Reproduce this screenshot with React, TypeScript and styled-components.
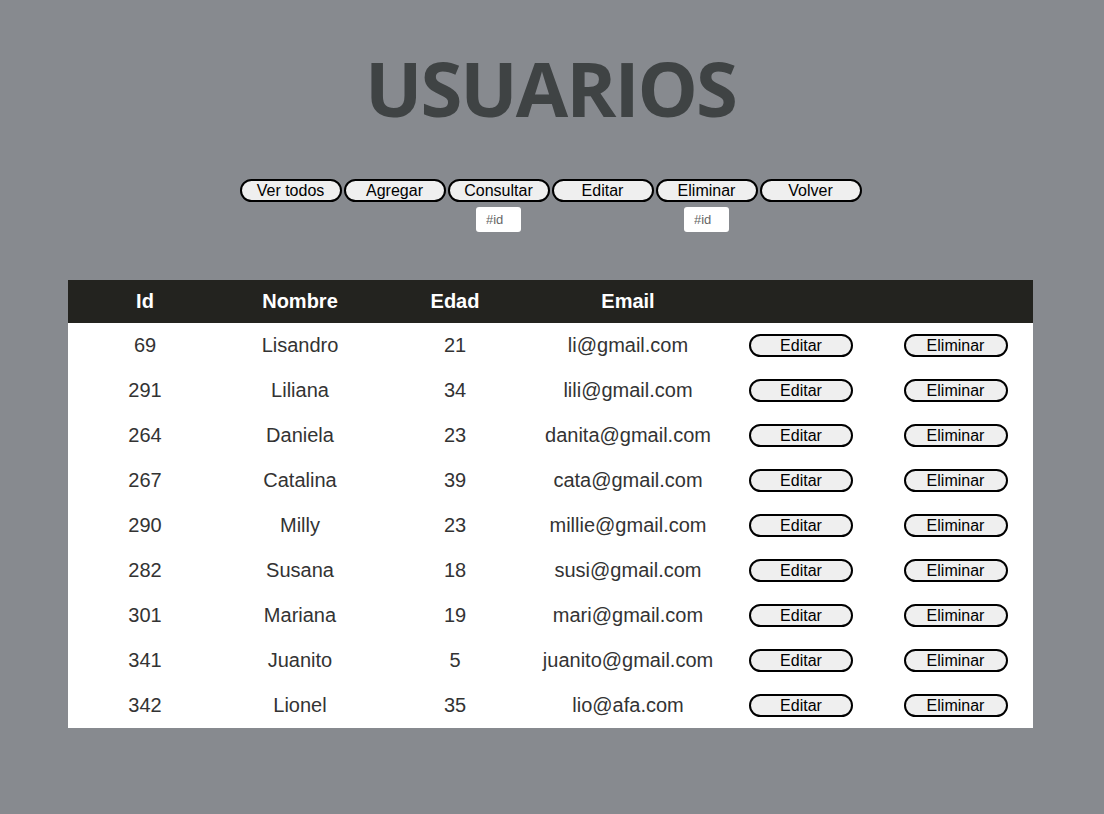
import styled, { createGlobalStyle } from "styled-components";

const GlobalStyle = createGlobalStyle`
  body {
    margin: 0;
    background: #878a8f;
    font-family: "Liberation Sans", Arial, sans-serif;
  }
`;

interface Usuario {
  id: number;
  nombre: string;
  edad: number;
  email: string;
}

const usuarios: Usuario[] = [
  { id: 69, nombre: "Lisandro", edad: 21, email: "li@gmail.com" },
  { id: 291, nombre: "Liliana", edad: 34, email: "lili@gmail.com" },
  { id: 264, nombre: "Daniela", edad: 23, email: "danita@gmail.com" },
  { id: 267, nombre: "Catalina", edad: 39, email: "cata@gmail.com" },
  { id: 290, nombre: "Milly", edad: 23, email: "millie@gmail.com" },
  { id: 282, nombre: "Susana", edad: 18, email: "susi@gmail.com" },
  { id: 301, nombre: "Mariana", edad: 19, email: "mari@gmail.com" },
  { id: 341, nombre: "Juanito", edad: 5, email: "juanito@gmail.com" },
  { id: 342, nombre: "Lionel", edad: 35, email: "lio@afa.com" },
];

const acciones = [
  { label: "Ver todos", input: false },
  { label: "Agregar", input: false },
  { label: "Consultar", input: true },
  { label: "Editar", input: false },
  { label: "Eliminar", input: true },
  { label: "Volver", input: false },
];

const Page = styled.div`
  min-height: 814px;
  display: flex;
  flex-direction: column;
  align-items: center;
  padding: 48px 3px 0 0;
  box-sizing: border-box;
`;

const Title = styled.h1`
  margin: 0;
  font-family: "Open Sans", sans-serif;
  font-weight: 700;
  font-size: 76px;
  line-height: 80px;
  color: #3f4344;
  letter-spacing: -2px;
`;

const Toolbar = styled.div`
  display: flex;
  gap: 2px;
  margin-top: 51px;
  height: 101px;
`;

const Group = styled.div`
  display: flex;
  flex-direction: column;
  align-items: center;
  gap: 5px;
`;

const Btn = styled.button<{ $w?: number }>`
  width: ${(p) => p.$w ?? 102}px;
  height: 23px;
  padding: 0;
  font-family: "Liberation Sans", Arial, sans-serif;
  font-size: 16px;
  color: #000;
  background: #efefef;
  border: 2px solid #000;
  border-radius: 12px;
  cursor: pointer;
`;

const IdInput = styled.input`
  width: 45px;
  height: 25px;
  box-sizing: border-box;
  border: none;
  border-radius: 3px;
  background: #fff;
  padding: 0 0 0 10px;
  font-family: "Liberation Sans", Arial, sans-serif;
  font-size: 13px;
  &::placeholder {
    color: #666;
  }
`;

const Table = styled.div`
  width: 965px;
  background: #fff;
`;

const cols = "154px 156px 154px 192px 154px 155px";

const HeadRow = styled.div`
  display: grid;
  grid-template-columns: ${cols};
  height: 43px;
  align-items: center;
  background: #23231f;
`;

const HeadCell = styled.div`
  text-align: center;
  color: #fff;
  font-weight: 700;
  font-size: 20px;
`;

const Row = styled.div`
  display: grid;
  grid-template-columns: ${cols};
  height: 45px;
  align-items: center;
`;

const Cell = styled.div`
  display: flex;
  justify-content: center;
  color: #333;
  font-size: 20px;
`;

export default function App() {
  return (
    <>
      <GlobalStyle />
      <Page>
        <Title>USUARIOS</Title>
        <Toolbar>
          {acciones.map((a) => (
            <Group key={a.label}>
              <Btn>{a.label}</Btn>
              {a.input && <IdInput placeholder="#id" />}
            </Group>
          ))}
        </Toolbar>
        <Table>
          <HeadRow>
            <HeadCell>Id</HeadCell>
            <HeadCell>Nombre</HeadCell>
            <HeadCell>Edad</HeadCell>
            <HeadCell>Email</HeadCell>
            <HeadCell />
            <HeadCell />
          </HeadRow>
          {usuarios.map((u) => (
            <Row key={u.id}>
              <Cell>{u.id}</Cell>
              <Cell>{u.nombre}</Cell>
              <Cell>{u.edad}</Cell>
              <Cell>{u.email}</Cell>
              <Cell>
                <Btn $w={104}>Editar</Btn>
              </Cell>
              <Cell>
                <Btn $w={104}>Eliminar</Btn>
              </Cell>
            </Row>
          ))}
        </Table>
      </Page>
    </>
  );
}
